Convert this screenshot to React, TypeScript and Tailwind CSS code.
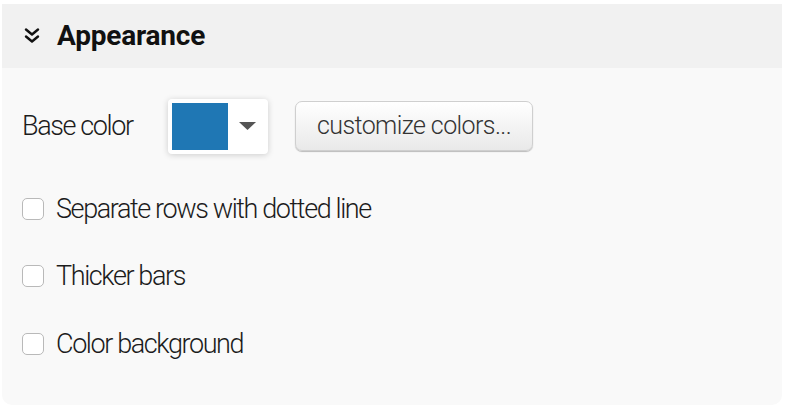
import React from "react";

const options = ["Separate rows with dotted line", "Thicker bars", "Color background"];

function ChevronsDown() {
  return (
    <svg width="16" height="16" viewBox="0 0 16 16" fill="none" stroke="#111" strokeWidth="2.4" strokeLinecap="round" strokeLinejoin="round">
      <polyline points="2,1.5 8,6.5 14,1.5" />
      <polyline points="2,8.5 8,13.5 14,8.5" />
    </svg>
  );
}

export default function App() {
  return (
    <div className="h-[408px] w-[790px] bg-white pt-[4px] pl-[2px] font-['Roboto',sans-serif]">
      <section className="w-[780px] h-[401px] overflow-hidden rounded-b-[10px] bg-[#f9f9f9]">
        <header className="flex h-[64px] items-center bg-[#f1f1f1] pl-[22px]">
          <ChevronsDown />
          <h2 className="ml-[17px] text-[28px] font-bold tracking-[-0.2px] text-[#111]">Appearance</h2>
        </header>
        <div className="pl-[20px] pt-[30px] text-[#1c1c1c]">
          <div className="flex h-[56px] items-center">
            <span className="w-[146px] text-[27px] font-light tracking-[-1.4px]">Base color</span>
            <button className="flex h-[55px] w-[100px] items-center rounded-[4px] bg-white p-[4px] shadow-[0_1px_6px_rgba(0,0,0,0.18)]">
              <span className="h-full w-[56px] bg-[#1f77b4]" />
              <svg className="ml-[11px]" width="17" height="8" viewBox="0 0 17 8">
                <polygon points="0,0 17,0 8.5,8" fill="#555" />
              </svg>
            </button>
            <button className="ml-[27px] flex h-[50px] w-[238px] items-center justify-center rounded-[7px] border border-[#cfcfcf] bg-gradient-to-b from-white to-[#e9e9e9] text-[25px] font-light tracking-[-0.6px] text-[#333] shadow-[0_1px_1px_rgba(0,0,0,0.25)]">
              customize colors...
            </button>
          </div>
          <div className="mt-[21px] flex flex-col">
            {options.map((label) => (
              <label key={label} className="flex h-[67.5px] items-center">
                <span className="h-[22px] w-[22px] rounded-[5px] border border-[#b9b9b9] bg-white" />
                <span className="ml-[12px] text-[27px] font-light tracking-[-1.4px]">{label}</span>
              </label>
            ))}
          </div>
        </div>
      </section>
    </div>
  );
}
